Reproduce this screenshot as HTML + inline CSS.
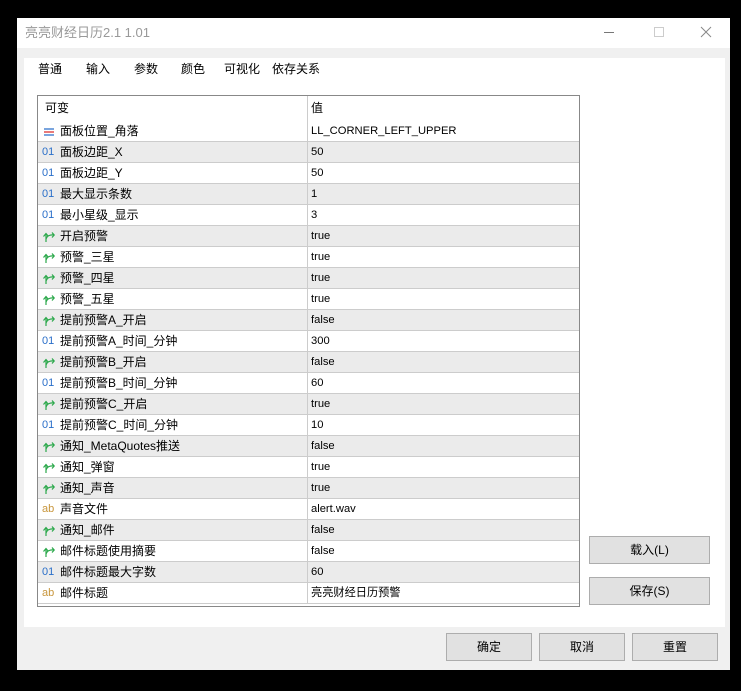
<!DOCTYPE html>
<html><head><meta charset="utf-8"><style>
*{margin:0;padding:0;box-sizing:border-box}
body{width:741px;height:691px;background:#000;position:relative;overflow:hidden;font-family:"Liberation Sans","Noto Sans CJK SC",sans-serif;font-size:12px;color:#000}
.win{position:absolute;left:17px;top:18px;width:713px;height:652px;background:#f0f0f0}
.title{position:absolute;left:0;top:0;width:713px;height:30px;background:#fff}
.title span{position:absolute;left:8px;top:0;line-height:30px;color:#999;font-size:13px}
.panel{position:absolute;left:7px;top:40px;width:701px;height:569px;background:#fff}
.tab{position:absolute;top:0;line-height:22px;font-size:12px}
.grid{position:absolute;left:37px;top:95px;width:543px;height:512px;border:1px solid #888;background:#fff;overflow:hidden}
.row{position:absolute;left:0;width:541px;height:21px;border-bottom:1px solid #ccc}
.row.g{background:#ebebeb}
.row .n{position:absolute;left:22px;top:0;line-height:20px}
.row .v{position:absolute;left:273px;top:0;line-height:20px;font-size:11.2px}
.row .d{position:absolute;left:269px;top:0;width:1px;height:21px;background:#ccc}
.ic{position:absolute;left:4px;top:4px;width:14px;height:13px;font-size:11px}
span.ic{top:0;line-height:20px}
.btn{position:absolute;background:#e1e1e1;border:1px solid #adadad;text-align:center;line-height:26px;font-size:12px}
</style></head><body>
<div class="win">
<div class="title"><span>亮亮财经日历2.1 1.01</span>
<div style="position:absolute;left:587px;top:14px;width:10px;height:1px;background:#777"></div>
<div style="position:absolute;left:637px;top:9px;width:10px;height:10px;border:1px solid #ccc"></div>
<svg style="position:absolute;left:683px;top:8px" width="12" height="12"><path d="M1 1L11 11M11 1L1 11" stroke="#888" stroke-width="1"/></svg>
</div>
<div class="panel">
<span class="tab" style="left:14px">普通</span>
<span class="tab" style="left:62px">输入</span>
<div style="position:absolute;left:62px;top:40px;width:24px;height:2px;background:#0078d7"></div>
<span class="tab" style="left:110px">参数</span>
<span class="tab" style="left:157px">颜色</span>
<span class="tab" style="left:200px">可视化</span>
<span class="tab" style="left:248px">依存关系</span>
</div>
<div class="btn" style="left:572px;top:518px;width:121px;height:28px">载入(L)</div>
<div class="btn" style="left:572px;top:559px;width:121px;height:28px">保存(S)</div>
<div class="btn" style="left:429px;top:615px;width:86px;height:28px">确定</div>
<div class="btn" style="left:522px;top:615px;width:86px;height:28px">取消</div>
<div class="btn" style="left:615px;top:615px;width:86px;height:28px">重置</div>
</div>
<div class="grid" id="g">
<div style="position:absolute;left:0;top:0;width:541px;height:25px;background:#fff">
<span style="position:absolute;left:7px;top:0;line-height:25px">可变</span>
<div style="position:absolute;left:269px;top:0;width:1px;height:25px;background:#ccc"></div>
<span style="position:absolute;left:273px;top:0;line-height:25px">值</span></div>
</div>
<script>
var rows=[["e","面板位置_角落","LL_CORNER_LEFT_UPPER"],["n","面板边距_X","50"],["n","面板边距_Y","50"],["n","最大显示条数","1"],["n","最小星级_显示","3"],["b","开启预警","true"],["b","预警_三星","true"],["b","预警_四星","true"],["b","预警_五星","true"],["b","提前预警A_开启","false"],["n","提前预警A_时间_分钟","300"],["b","提前预警B_开启","false"],["n","提前预警B_时间_分钟","60"],["b","提前预警C_开启","true"],["n","提前预警C_时间_分钟","10"],["b","通知_MetaQuotes推送","false"],["b","通知_弹窗","true"],["b","通知_声音","true"],["s","声音文件","alert.wav"],["b","通知_邮件","false"],["b","邮件标题使用摘要","false"],["n","邮件标题最大字数","60"],["s","邮件标题","亮亮财经日历预警"]];
var h="";
rows.forEach(function(r,i){
var ic="";
if(r[0]=="e")ic='<svg class="ic" viewBox="0 0 14 13"><path d="M2 4h10M2 10h10" stroke="#2a6fc9" stroke-width="1.3"/><path d="M2 7h10" stroke="#d33" stroke-width="1.3"/></svg>';
else if(r[0]=="n")ic='<span class="ic" style="color:#2a6fc9">01</span>';
else if(r[0]=="s")ic='<span class="ic" style="color:#c8963c">ab</span>';
else ic='<svg class="ic" viewBox="0 0 14 13"><path d="M4 12V4M1.5 6.5L4 3.5 6.5 6.5M4 9c1-3 4-4.5 8-4M10 2.5l2.2 2.5-2.2 2.5" stroke="#2aa84a" stroke-width="1.2" fill="none"/></svg>';
h+='<div class="row'+(i%2?' g':'')+'" style="top:'+(25+21*i)+'px">'+ic+'<span class="n">'+r[1]+'</span><div class="d"></div><span class="v">'+r[2]+'</span></div>';
});
document.getElementById("g").insertAdjacentHTML("beforeend",h);
</script>
</body></html>
